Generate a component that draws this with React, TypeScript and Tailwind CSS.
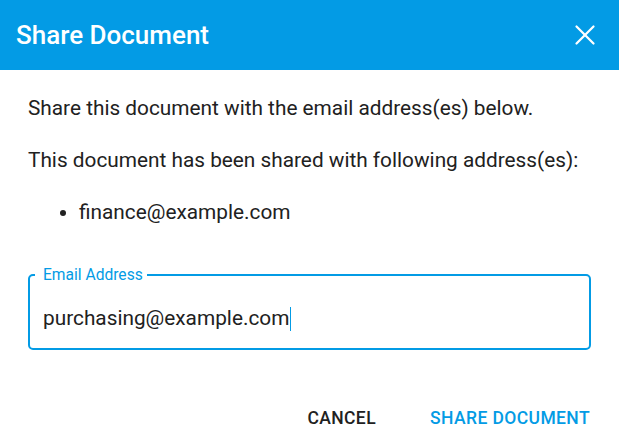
import { X } from "lucide-react";

export default function App() {
  return (
    <div className="w-[619px] h-[448px] bg-white flex flex-col text-[#212121]" style={{ fontFamily: "Roboto, sans-serif" }}>
      {/* Header */}
      <div className="h-[70px] bg-[#039be5] flex items-center justify-between pl-4 pr-[17px]">
        <h1 className="text-[26px] font-medium text-white">Share Document</h1>
        <X className="w-[34px] h-[34px] text-white" strokeWidth={1.6} />
      </div>

      {/* Body */}
      <div className="flex flex-col px-[28px] pt-[25px]">
        <p className="text-[20.8px] leading-[26px]">Share this document with the email address(es) below.</p>
        <p className="text-[20.8px] leading-[26px] mt-[26px]">This document has been shared with following address(es):</p>
        <ul className="list-disc pl-[51px] mt-[26px]">
          <li className="text-[20.8px] leading-[26px]">finance@example.com</li>
        </ul>

        <fieldset className="mt-[41px] border-2 border-[#039be5] rounded-[5px] h-[84px] px-[13px]">
          <legend className="text-[15.6px] text-[#039be5] pl-[8px] pr-[4px] -ml-[8px] leading-[18px]">Email Address</legend>
          <div className="flex items-center h-[52px] mt-[9px] text-[20.8px]">
            <span>purchasing@example.com</span>
            <span className="w-px h-[24px] bg-[#039be5] ml-px" />
          </div>
        </fieldset>
      </div>

      {/* Actions */}
      <div className="flex justify-end items-center gap-[54px] pr-[29px] mt-[56px]">
        <button className="text-[17.5px] leading-[24px] font-medium tracking-[0.4px]">CANCEL</button>
        <button className="text-[17.5px] leading-[24px] font-medium text-[#039be5] tracking-[0.4px]">SHARE DOCUMENT</button>
      </div>
    </div>
  );
}
